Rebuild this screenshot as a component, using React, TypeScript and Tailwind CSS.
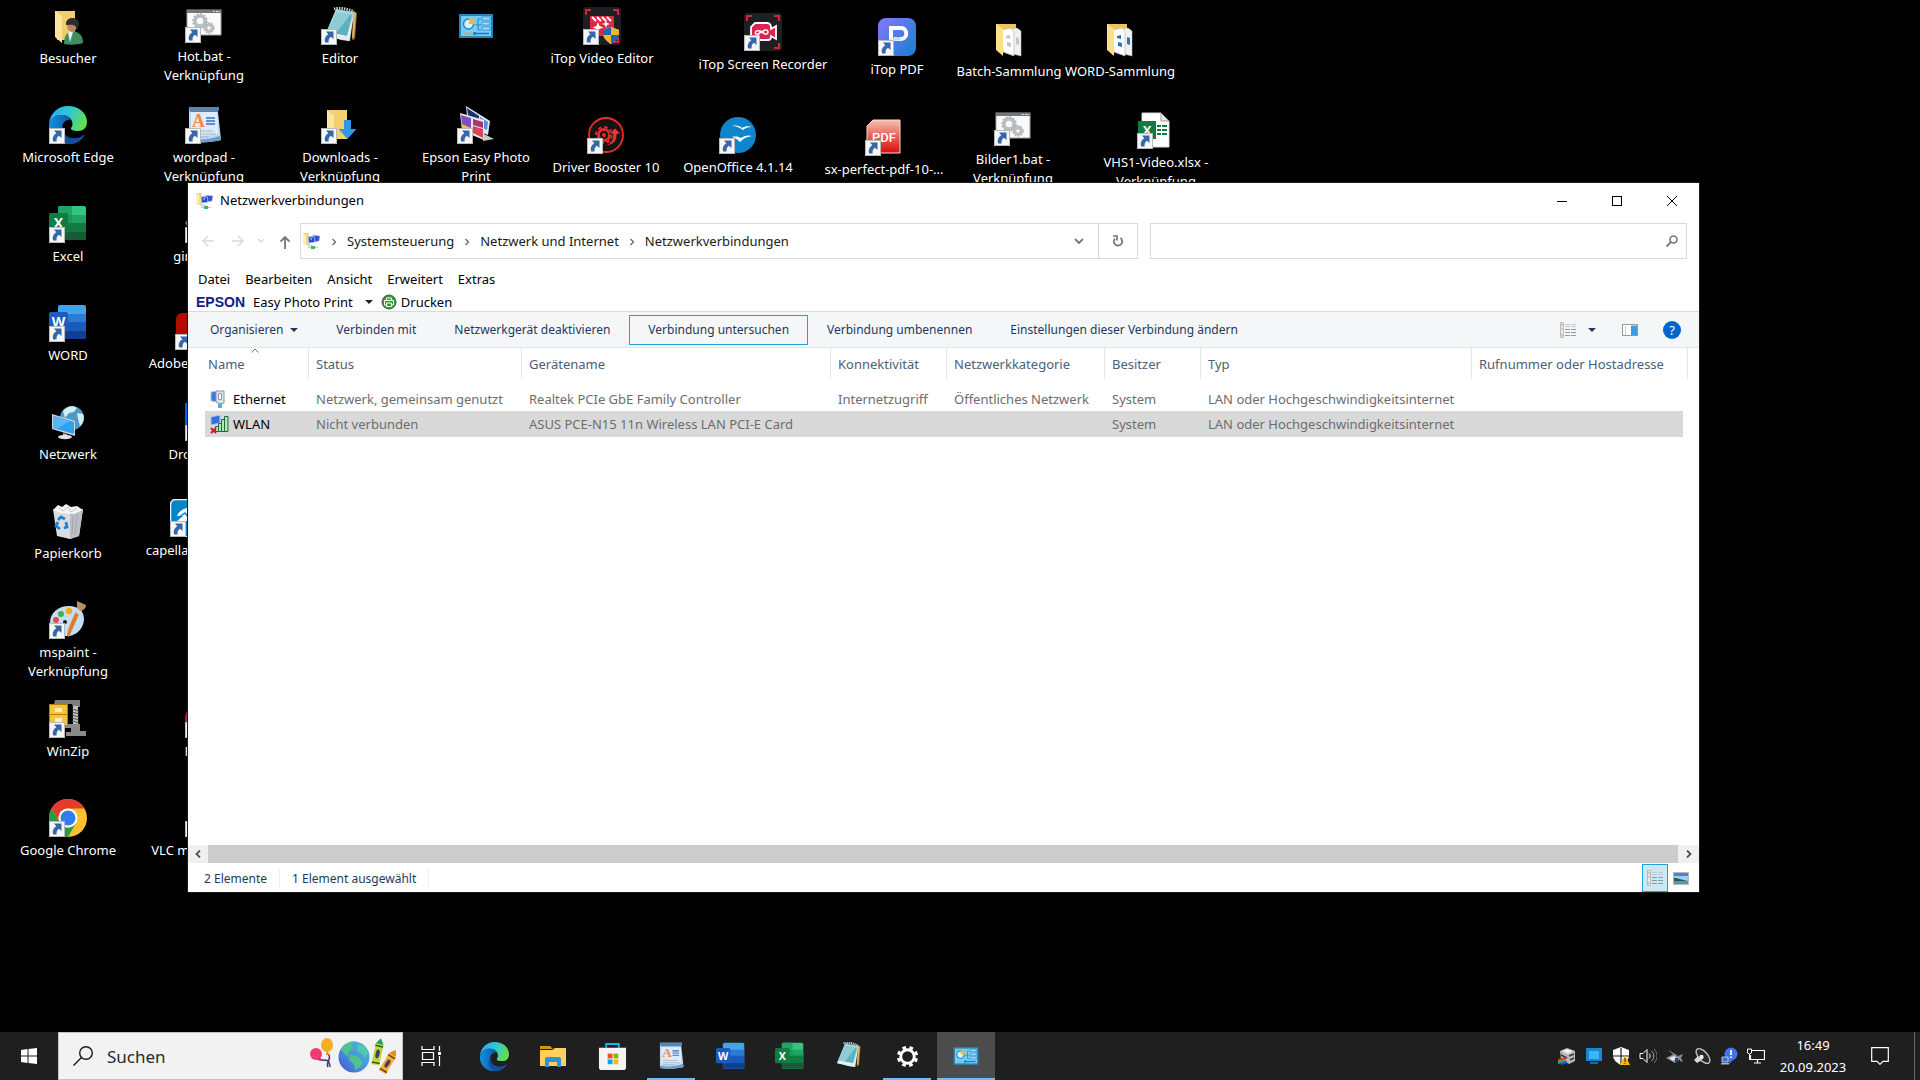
import React from 'react';

type IconProps = { className?: string };

const ShortcutArrow: React.FC = () => (
  <svg viewBox="0 0 16 16" className="absolute bottom-0 left-0 h-4 w-4">
    <rect x="0.5" y="0.5" width="15" height="15" fill="#f6f6f6" stroke="#b9b9b9" />
    <path d="M5 2.500h7.500V10L10 7.800C8 9 7.300 11 7.600 13.500H4.200C3 10 4.500 7 7.300 5.200Z" fill="#3567a8" />
  </svg>
);

const EdgeIcon: React.FC<IconProps> = ({ className }) => (
  <svg viewBox="0 0 38 38" className={className}>
    <defs>
      <linearGradient id="edgeTop" x1="0" x2="1" y1="0.2" y2="0.5">
        <stop offset="0" stopColor="#2aa9ec" />
        <stop offset="0.5" stopColor="#2fc6d6" />
        <stop offset="1" stopColor="#63e04a" />
      </linearGradient>
      <linearGradient id="edgeSide" x1="0" x2="1">
        <stop offset="0" stopColor="#1391e0" />
        <stop offset="1" stopColor="#0b4f9e" />
      </linearGradient>
    </defs>
    <path d="M0 18C1 7 9 0 19 0c11 0 19 7 19 16 0 6-4 9-9 9-5 0-7-1-7-2.500 0-1 1.500-2 1.500-4.500C23.500 12 18 9 12 9 6 9 2 13 0 18Z" fill="url(#edgeTop)" />
    <path d="M0 19C1 12 6 9 12 9c6 0 9 2 10 5-4-1-9 2-9 9 0 8 5 14 12 15C10 41-1 31 0 19Z" fill="url(#edgeSide)" />
    <path d="M14 20c-1 9 6 13 13 12 3 0 6-2 7.500-3 .8-.4 1.200 0 .8.700C32 35 26 38.500 21 38c-9-2-13-12-7-18Z" fill="#124f9c" />
  </svg>
);

const OfficeIcon: React.FC<IconProps & { letter: string; shades: string[] }> = ({ className, letter, shades }) => (
  <svg viewBox="0 0 38 38" className={className}>
    <rect x="9" y="1" width="28" height="34" rx="2" fill={shades[0]} />
    <rect x="9" y="10" width="28" height="9" fill={shades[1]} />
    <rect x="9" y="18" width="28" height="9" fill={shades[2]} />
    <path d="M9 27h28v6a2 2 0 0 1-2 2H11a2 2 0 0 1-2-2Z" fill={shades[3]} />
    {letter === 'X' && (
      <>
        <path d="M11 1h12v9H9V3a2 2 0 0 1 2-2Z" fill="#21a366" />
        <path d="M9 10h14v8H9Z" fill="#179a5a" />
        <path d="M23 18h14v9H23Z" fill="#107c41" />
      </>
    )}
    <rect x="0" y="8" width="19" height="20" rx="2" fill={shades[4]} />
    <text x="9.500" y="23" textAnchor="middle" fontSize="14" fontWeight="700" fontFamily="Open Sans" fill="#fff">{letter}</text>
  </svg>
);

const wordShades = ['#41a5ee', '#2b7cd3', '#185abd', '#103f91', '#1b5cbe'];
const excelShades = ['#33c481', '#21a366', '#107c41', '#185c37', '#107c41'];

const WordIcon: React.FC<IconProps> = ({ className }) => <OfficeIcon className={className} letter="W" shades={wordShades} />;
const ExcelIcon: React.FC<IconProps> = ({ className }) => <OfficeIcon className={className} letter="X" shades={excelShades} />;

const NotepadIcon: React.FC<IconProps> = ({ className }) => (
  <svg viewBox="0 0 38 38" className={className}>
    <path d="m32 4 4 2-2 26-3 1Z" fill="#9a6d2c" />
    <path d="m33 5 2 1-2 24-2 1Z" fill="#e0b767" />
    <path d="M15 2 33 5l-4 29-9-1L4 28Z" fill="#9fd5dd" />
    <path d="m16 6 15 2-5 21L7 25Z" fill="#5eb2c0" />
    <path d="M16 6 7 25l8 1L29 8Z" fill="#8dcdd6" />
    <path d="m26 29-19-4-3 4 24 5 5-28Z" fill="#e7eef0" />
    <path d="M13 2c6-2 14 0 20 3" fill="none" stroke="#c5cdd0" strokeWidth="3" strokeDasharray="1.500 1" />
  </svg>
);

const WordpadIcon: React.FC<IconProps> = ({ className }) => (
  <svg viewBox="0 0 38 38" className={className}>
    <path d="M4 1h30l-1 5 3 28c-9 2-22 4-32 1Z" fill="#bcdaf3" />
    <path d="M6 5h26l1 23c-9 2-18 2-27 1Z" fill="#dcecfa" />
    <path d="M4 1h30l-1 5H5Z" fill="#5586b4" />
    <path d="M4 32c10 3 22 1 31-2l1 4c-9 2-22 4-32 1Z" fill="#6f9cc5" />
    <text x="7" y="21" fontSize="18" fontWeight="700" fontFamily="Liberation Serif" fill="#f58a3c">A</text>
    <path d="M21 12h9M21 15h9M21 18h9" stroke="#3c6cc0" strokeWidth="1.500" />
    <path d="M8 25h20M8 28h23M8 31h16" stroke="#9fb3c8" />
  </svg>
);

const BatchIcon: React.FC<IconProps> = ({ className }) => (
  <svg viewBox="0 0 38 38" className={className}>
    <rect x="2" y="5" width="34" height="25" fill="#fafafa" stroke="#9da1a5" />
    <path d="M2 5h34v3H2Z" fill="#73777c" />
    <path d="M28 6.500h1.500m1.500 0h1.500m1 0h1" stroke="#fff" />
    <circle cx="15" cy="16" r="5" fill="none" stroke="#b9bec3" strokeWidth="3.500" />
    <circle cx="15" cy="16" r="7" fill="none" stroke="#a9afb5" strokeWidth="1.500" strokeDasharray="2 1.660" />
    <circle cx="24" cy="23" r="3.200" fill="none" stroke="#b9bec3" strokeWidth="3" />
    <circle cx="24" cy="23" r="5" fill="none" stroke="#a9afb5" strokeWidth="1.500" strokeDasharray="1.700 1.440" />
  </svg>
);

const UserFolderIcon: React.FC<IconProps> = ({ className }) => (
  <svg viewBox="0 0 38 38" className={className}>
    <path d="M6 4h20v29H8Z" fill="#f0cd6d" />
    <path d="m6 4 7 5v27l-7-6Z" fill="#fde49a" />
    <path d="M15 37c0-9 3-12 9-13 6 1 10 4 10 12-6 2-13 2-19 1Z" fill="#3f8e63" />
    <path d="m19 26 3-3 2 2-3 10Z" fill="#eef1ee" />
    <ellipse cx="23" cy="18" rx="5" ry="7" fill="#b98863" />
    <path d="M17 18c-1-9 13-9 13-1l-2 6c-1-5-3-6-11-5Z" fill="#2d2d2d" />
  </svg>
);

const DownloadsIcon: React.FC<IconProps> = ({ className }) => (
  <svg viewBox="0 0 38 38" className={className}>
    <path d="M6 4h20v29H8Z" fill="#f2cf70" />
    <path d="m6 4 7 5v27l-7-6Z" fill="#fde49a" />
    <path d="M23 14h7v9h5.500l-9 10-9-10H23Z" fill="#2f97ea" />
  </svg>
);

const ControlPanelIcon: React.FC<IconProps> = ({ className }) => (
  <svg viewBox="0 0 38 38" className={className}>
    <rect x="2" y="7" width="34" height="24" fill="#2586b4" />
    <rect x="4" y="9" width="30" height="20" fill="#74cdf8" />
    <circle cx="11.500" cy="17" r="5" fill="#d9f2ff" stroke="#2a86c4" strokeWidth="1.500" />
    <path d="M12 17v-6a6 6 0 0 1 6 6Z" fill="#f9b52c" />
    <path d="M18 18h3v-6h3m-3 6h3m-3 0v5h3" fill="none" stroke="#2a86c4" />
    <path d="M25 10h8v3h-8Zm0 5h8v3h-8Zm0 5h8v3h-8Z" fill="#a6e0fb" stroke="#2a86c4" strokeWidth="0.800" />
    <path d="M7 26.500h10" stroke="#f0a11a" strokeWidth="1.500" />
    <path d="M17 26.500h15" stroke="#1f78b5" strokeWidth="1.500" />
    <rect x="16.500" y="25" width="2.500" height="3" fill="#1f78b5" />
  </svg>
);

const VideoEditorIcon: React.FC<IconProps> = ({ className }) => (
  <svg viewBox="0 0 38 38" className={className}>
    <rect width="38" height="38" rx="4" fill="#1d1f22" />
    <path d="M3 8V3h5m22 0h5v5M35 30v5h-5" fill="none" stroke="#d3263a" strokeWidth="2" />
    <path d="M7 9h24v20H7Z" fill="#e32741" />
    <path d="m9 10 4 4m1-4 4 4m1-4 4 4m1-4 4 4" stroke="#fff" strokeWidth="2" />
    <path d="m15 15 1.500 4 4 1.500-4 1.500-1.500 4-1.500-4-4-1.500 4-1.500Zm8-2 1 3 3 1-3 1-1 3-1-3-3-1 3-1Z" fill="#fff" />
    <path d="m28 20 8 3c0 6-2 10-8 14-6-4-8-8-8-14Z" fill="#f5f5f5" />
    <path d="m28 20 8 3v5h-8Zm0 8v9c-4-3-7-5-8-9Z" fill="#f6b52e" />
    <path d="m28 20-8 3v5h8Zm0 8v9c4-3 7-5 8-9Z" fill="#2164b8" />
  </svg>
);

const RecorderIcon: React.FC<IconProps> = ({ className }) => (
  <svg viewBox="0 0 38 38" className={className}>
    <rect width="38" height="38" rx="4" fill="#1d1f22" />
    <path d="M3 8V3h5m22 0h5v5M35 30v5h-5" fill="none" stroke="#d3263a" strokeWidth="2" />
    <path d="M11 10h12a4 4 0 0 1 4 4v2l5-3v13l-5-3v1a3 3 0 0 1-3 3H10a3 3 0 0 1-3-3V14Z" fill="#df2350" stroke="#fff" strokeWidth="1.800" />
    <path d="m12 22 9-5c4-1 4 5 0 4l-5-3c-6-2-6 5-1 3" fill="none" stroke="#fff" strokeWidth="1.500" />
  </svg>
);

const ItopPdfIcon: React.FC<IconProps> = ({ className }) => (
  <svg viewBox="0 0 38 38" className={className}>
    <defs>
      <linearGradient id="itop" x1="0" y1="0" x2="1" y2="1">
        <stop offset="0" stopColor="#8578f8" />
        <stop offset="1" stopColor="#187fd0" />
      </linearGradient>
    </defs>
    <rect width="38" height="38" rx="8" fill="url(#itop)" />
    <path d="M13 20V10h10c7 0 7 11 0 11h-7" fill="none" stroke="#fff" strokeWidth="4" />
    <path d="M14 21h7v-1.500" stroke="#bfe3ff" strokeWidth="3" />
    <path d="M11 20h4v9h-4Z" fill="#fff" opacity="0.900" />
  </svg>
);

const FilesFolderIcon: React.FC<IconProps & { mark?: string }> = ({ className, mark = '#c3c7cb' }) => (
  <svg viewBox="0 0 38 38" className={className}>
    <path d="M6 4h20v25H8Z" fill="#eac55f" />
    <path d="m19 10 8-2 4 3v25l-8-2Z" fill="#f1f1f1" stroke="#c5c5c5" strokeWidth="0.500" />
    <path d="m12 10 9-2 3 4v24l-11-4Z" fill="#fff" stroke="#bbb" strokeWidth="0.700" />
    <path d="m16 16 4-1v4l-4-1Zm1 6 4 1v4l-4-1Zm9-5 3 1v7l-3-1Z" fill={mark} />
    <path d="m6 4 7 5v27l-7-6Z" fill="#fde08c" />
  </svg>
);

const WordFolderIcon: React.FC<IconProps> = ({ className }) => <FilesFolderIcon className={className} mark="#2f6fc4" />;

const EpsonPhotoIcon: React.FC<IconProps> = ({ className }) => (
  <svg viewBox="0 0 38 38" className={className}>
    <path d="m9 0 24 15-2 14-20-8Z" fill="#dfe6f2" />
    <path d="m10 2 12 8v9l-10-4Z" fill="#15336f" />
    <path d="m23 11 8 5-1 8-7-3Z" fill="#5b8be0" />
    <path d="m3 7 24 7v20L5 25Z" fill="#e9e4ee" />
    <path d="m4 9 10 3v11L5 20Z" fill="#7d4fc3" />
    <path d="m16 13 10 3v6l-10-3Z" fill="#a03c6a" />
    <path d="m16 20 10 3v9l-10-5Z" fill="#d6455c" />
    <path d="m5 18 9 4v4l-9-3Z" fill="#e8c34a" />
    <path d="m27 28 10 5-11 2Z" fill="#c9c9c9" />
  </svg>
);

const DriverBoosterIcon: React.FC<IconProps> = ({ className }) => (
  <svg viewBox="0 0 38 38" className={className}>
    <circle cx="19" cy="19" r="17" fill="#141414" stroke="#ee2a2e" strokeWidth="1.800" />
    <circle cx="17" cy="19" r="5.500" fill="none" stroke="#e4282c" strokeWidth="3" />
    <circle cx="17" cy="19" r="8" fill="none" stroke="#e4282c" strokeWidth="2" strokeDasharray="3.500 2.780" />
    <path d="M16 29c7 0 10-4 10-11h-4l6-6 6 6h-4c0 8-5 13-14 11Z" fill="#f03438" stroke="#141414" strokeWidth="0.800" />
    <circle cx="17" cy="19" r="2" fill="#e4282c" />
  </svg>
);

const OpenOfficeIcon: React.FC<IconProps> = ({ className }) => (
  <svg viewBox="0 0 38 38" className={className}>
    <circle cx="19" cy="19" r="18" fill="#0e85cd" />
    <path d="M13 10c5-1 8 0 10 2 3-2 7-2 10-1-4 0-7 1-9 3-3-2-6-4-11-4Z" fill="#fff" />
    <path d="M13 21c4-1 7 0 9 1 4-3 8-3 11-2-6 1-9 3-12 6-3-3-5-4-8-5Z" fill="#fff" />
  </svg>
);

const PerfectPdfIcon: React.FC<IconProps> = ({ className }) => (
  <svg viewBox="0 0 38 38" className={className}>
    <defs>
      <linearGradient id="perfectPdf" x1="0" y1="0" x2="0" y2="1">
        <stop offset="0" stopColor="#f5c0b0" />
        <stop offset="0.450" stopColor="#e96a5d" />
        <stop offset="1" stopColor="#dd0b0b" />
      </linearGradient>
    </defs>
    <path d="M8 2h27v33H2V8Z" fill="url(#perfectPdf)" stroke="#f7ddd4" strokeLinejoin="round" />
    <text x="19" y="24" textAnchor="middle" fontSize="13" fontFamily="Roboto" fontWeight="500" fill="#fff">PDF</text>
  </svg>
);

const XlsxIcon: React.FC<IconProps> = ({ className }) => (
  <svg viewBox="0 0 38 38" className={className}>
    <path d="M5 2h19l8 8v26H5Z" fill="#fff" stroke="#d8d8d8" />
    <path d="M24 2v8h8Z" fill="#e9e9e9" stroke="#9b9b9b" />
    <path d="M20 15h4m1 0h5m-10 4h4m1 0h5m-10 4h4m1 0h5" stroke="#107c41" strokeWidth="1.800" />
    <rect x="1" y="10" width="18" height="18" fill="#107c41" />
    <text x="10" y="24" textAnchor="middle" fontSize="13" fontWeight="700" fontFamily="Open Sans" fill="#fff">X</text>
  </svg>
);

const NetworkIcon: React.FC<IconProps> = ({ className }) => (
  <svg viewBox="0 0 38 38" className={className}>
    <circle cx="23" cy="15" r="12" fill="#4b9cc4" />
    <path d="M14 8c4-5 10-6 14-3l-3 4-5 1-4 5Zm14 2 6 1c2 5 0 9-3 12l-2-7Z" fill="#d3edf3" />
    <path d="m3 11 23 7v15L3 26Z" fill="#cfd4d8" />
    <path d="m4 12.500 21 6.500v12L4 25Z" fill="#2f9ff2" />
    <path d="m4 12.500 17 5.500L8 26l-4-1Z" fill="#55b5fa" />
    <path d="m14 30 4 1v3h-4Z" fill="#aaa" />
    <ellipse cx="16" cy="34" rx="7" ry="2.200" fill="#dfe1e3" />
  </svg>
);

const RecycleIcon: React.FC<IconProps> = ({ className }) => (
  <svg viewBox="0 0 38 38" className={className}>
    <path d="m4 7 7 3 15 1 8-4-4 27-9 3-13-3Z" fill="#d9dde0" />
    <path d="M21 11 34 7l-4 27-9 3Z" fill="#b9bfc4" />
    <path d="m4 8 5-5 4 2 4-3 5 3 6-1 6 4-9 4-13-1Z" fill="#f3f4f5" />
    <path d="m10 6 4 3 5-4 3 5 6-4" fill="none" stroke="#bfc5c9" />
    <path d="m9 18 3-3 4 2m1 3 1 5-3 1m-4 1-4-3 2-4" fill="none" stroke="#1c7fd6" strokeWidth="2.800" />
    <path d="m24 14-1 19m5-20-2 19" stroke="#a5abb0" />
  </svg>
);

const PaintIcon: React.FC<IconProps> = ({ className }) => (
  <svg viewBox="0 0 38 38" className={className}>
    <path d="M1 22C1 11 10 5 20 5c9 0 15 5 15 13 0 9-8 18-18 17C12 35 1 32 1 22Z" fill="#c5def2" />
    <circle cx="7" cy="19" r="3" fill="#e14b4b" />
    <circle cx="12" cy="13" r="3" fill="#49b04a" />
    <circle cx="20" cy="10" r="3.200" fill="#f6a821" />
    <circle cx="16" cy="21" r="2" fill="#16191c" />
    <path d="m28 9 3 2-11 25-2-1c1-8 5-17 10-26Z" fill="#e07b2c" />
    <path d="m28 7 5 3-3 4-3-2Z" fill="#cfd6dc" />
    <path d="m28 0 9 4c0 3-2 5-5 6l-4-3Z" fill="#b98f66" />
  </svg>
);

const WinZipIcon: React.FC<IconProps> = ({ className }) => (
  <svg viewBox="0 0 38 38" className={className}>
    <path d="M6 0h25v7h-7l-1-3H5Z" fill="#7e7e7e" />
    <path d="M24 6h5v22h-5Z" fill="#bfbfbf" />
    <path d="m23 9 7 2m-7 1 7 2m-7 1 7 2m-7 1 7 2m-7 1 7 2" stroke="#555" />
    <path d="M15 24h16v7h6v5H17v-4h5v-4h-7Z" fill="#8a8a8a" />
    <rect x="0" y="4" width="19" height="22" fill="#b77d11" />
    <path d="M1 5h17v9H1Zm0 10h17v10H1Z" fill="#f7c338" />
    <path d="M6 8h7v4H6Zm0 10h7v4H6Z" fill="#fff0bd" />
  </svg>
);

const ChromeIcon: React.FC<IconProps> = ({ className }) => (
  <svg viewBox="0 0 38 38" className={className}>
    <circle cx="19" cy="19" r="19" fill="#fbc02d" />
    <path d="M2.500 9.500A19 19 0 0 1 35.500 9.500H19A9.500 9.500 0 0 0 10.800 23.800Z" fill="#e33b2e" />
    <path d="M2.500 9.500A19 19 0 0 0 19 38l8.200-14.200A9.500 9.500 0 0 1 10.800 23.800Z" fill="#269a48" />
    <circle cx="19" cy="19" r="9.500" fill="#fff" />
    <circle cx="19" cy="19" r="7.500" fill="#2f7df0" />
  </svg>
);

const GrayAppIcon: React.FC<IconProps> = ({ className }) => (
  <svg viewBox="0 0 38 38" className={className}>
    <path d="M0 18c4-8 10-4 16-6l14-6v22H6Z" fill="#6d6a66" />
  </svg>
);

const AcrobatIcon: React.FC<IconProps> = ({ className }) => (
  <svg viewBox="0 0 38 38" className={className}>
    <rect x="1" y="1" width="36" height="36" rx="6" fill="#b30b00" />
  </svg>
);

const DropboxIcon: React.FC<IconProps> = ({ className }) => (
  <svg viewBox="0 0 38 38" className={className}>
    <rect width="38" height="38" fill="#0061fe" />
  </svg>
);

const CapellaIcon: React.FC<IconProps> = ({ className }) => (
  <svg viewBox="0 0 38 38" className={className}>
    <rect x="0.500" y="0.500" width="37" height="37" rx="5" fill="#0a85c7" stroke="#e4f2fa" strokeWidth="1.500" />
    <path d="M7 17c2-6 9-9 17-9v14H7l6-5Z" fill="#f3f9fc" />
    <path d="m9 18 6-4 5 6" fill="none" stroke="#0a85c7" strokeWidth="1.500" />
  </svg>
);

const RedAppIcon: React.FC<IconProps> = ({ className }) => (
  <svg viewBox="0 0 38 38" className={className}>
    <circle cx="19" cy="19" r="19" fill="#b3262b" />
  </svg>
);

const ConeIcon: React.FC<IconProps> = ({ className }) => (
  <svg viewBox="0 0 38 38" className={className}>
    <path d="m14 2 10 0 8 30H6Z" fill="#ef7d1a" />
  </svg>
);

type Shortcut = {
  place: string;
  icon: React.FC<IconProps>;
  lines: string[];
  link?: boolean;
};

// Icons sit freely on the desktop, so each carries its own position
const shortcuts: Shortcut[] = [
  { place: 'left-[4px] top-[7px]', icon: UserFolderIcon, lines: ['Besucher'] },
  { place: 'left-[4px] top-[106px]', icon: EdgeIcon, lines: ['Microsoft Edge'], link: true },
  { place: 'left-[4px] top-[205px]', icon: ExcelIcon, lines: ['Excel'], link: true },
  { place: 'left-[4px] top-[304px]', icon: WordIcon, lines: ['WORD'], link: true },
  { place: 'left-[4px] top-[403px]', icon: NetworkIcon, lines: ['Netzwerk'] },
  { place: 'left-[4px] top-[502px]', icon: RecycleIcon, lines: ['Papierkorb'] },
  { place: 'left-[4px] top-[601px]', icon: PaintIcon, lines: ['mspaint -', 'Verknüpfung'], link: true },
  { place: 'left-[4px] top-[700px]', icon: WinZipIcon, lines: ['WinZip'], link: true },
  { place: 'left-[4px] top-[799px]', icon: ChromeIcon, lines: ['Google Chrome'], link: true },
  { place: 'left-[140px] top-[5px]', icon: BatchIcon, lines: ['Hot.bat -', 'Verknüpfung'], link: true },
  { place: 'left-[140px] top-[106px]', icon: WordpadIcon, lines: ['wordpad -', 'Verknüpfung'], link: true },
  { place: 'left-[140px] top-[205px]', icon: GrayAppIcon, lines: ['gimp-2.10'], link: true },
  { place: 'left-[130px] top-[312px]', icon: AcrobatIcon, lines: ['Adobe Acrobat'], link: true },
  { place: 'left-[140px] top-[403px]', icon: DropboxIcon, lines: ['Dropbox 25'], link: true },
  { place: 'left-[125px] top-[499px]', icon: CapellaIcon, lines: ['capella reader'], link: true },
  { place: 'left-[140px] top-[700px]', icon: RedAppIcon, lines: ['PDF24'], link: true },
  { place: 'left-[140px] top-[799px]', icon: ConeIcon, lines: ['VLC media player'], link: true },
  { place: 'left-[276px] top-[7px]', icon: NotepadIcon, lines: ['Editor'], link: true },
  { place: 'left-[276px] top-[106px]', icon: DownloadsIcon, lines: ['Downloads -', 'Verknüpfung'], link: true },
  { place: 'left-[412px] top-[7px]', icon: ControlPanelIcon, lines: [] },
  { place: 'left-[412px] top-[106px]', icon: EpsonPhotoIcon, lines: ['Epson Easy Photo', 'Print'], link: true },
  { place: 'left-[538px] top-[7px]', icon: VideoEditorIcon, lines: ['iTop Video Editor'], link: true },
  { place: 'left-[542px] top-[116px]', icon: DriverBoosterIcon, lines: ['Driver Booster 10'], link: true },
  { place: 'left-[699px] top-[13px]', icon: RecorderIcon, lines: ['iTop Screen Recorder'], link: true },
  { place: 'left-[674px] top-[116px]', icon: OpenOfficeIcon, lines: ['OpenOffice 4.1.14'], link: true },
  { place: 'left-[833px] top-[18px]', icon: ItopPdfIcon, lines: ['iTop PDF'], link: true },
  { place: 'left-[820px] top-[118px]', icon: PerfectPdfIcon, lines: ['sx-perfect-pdf-10-...'], link: true },
  { place: 'left-[945px] top-[20px]', icon: FilesFolderIcon, lines: ['Batch-Sammlung'] },
  { place: 'left-[949px] top-[108px]', icon: BatchIcon, lines: ['Bilder1.bat -', 'Verknüpfung'], link: true },
  { place: 'left-[1056px] top-[20px]', icon: WordFolderIcon, lines: ['WORD-Sammlung'] },
  { place: 'left-[1092px] top-[111px]', icon: XlsxIcon, lines: ['VHS1-Video.xlsx -', 'Verknüpfung'], link: true },
];

const DesktopShortcut: React.FC<Shortcut> = ({ place, icon: Icon, lines, link }) => (
  <button type="button" aria-label={lines.join(' ') || 'Systemsteuerung'} className={`absolute flex w-32 flex-col items-center gap-1 text-[13px] leading-[19px] text-white ${place}`}>
    <span className="relative block h-[38px] w-[38px]">
      <Icon className="h-[38px] w-[38px]" />
      {link && <ShortcutArrow />}
    </span>
    <span className="block whitespace-nowrap">
      {lines.map((line) => (
        <span key={line} className="block">{line}</span>
      ))}
    </span>
  </button>
);

const FolderNetIcon: React.FC = () => (
  <svg viewBox="0 0 18 18" className="h-[18px] w-[18px] shrink-0">
    <path d="M0 1h6v12H2l-2-2Z" fill="#f1d987" />
    <path d="m0 1 3 3v9l-3-2Z" fill="#fbeebb" />
    <path d="m10 3 7 1-1 5-4 1Z" fill="#3353d2" stroke="#c3d2ee" strokeWidth="0.500" />
    <path d="m5 5 6-1 1 6-6 1Z" fill="#1c3fd6" stroke="#a9c4ee" strokeWidth="0.800" />
    <path d="m6.500 6 3.500-1-2 4Z" fill="#79a8f5" />
    <path d="M4 12.500h5l1 1.500-5 .500Z" fill="#c5d5e8" />
    <path d="M5 15h10v1H5Z" fill="#a8dda3" />
    <path d="M8 14h4v3H8Z" fill="#3fb958" />
  </svg>
);

const Chevron: React.FC = () => (
  <svg viewBox="0 0 6 8" className="h-2 w-1.5 shrink-0">
    <path d="m1.500 1 3 3-3 3" fill="none" stroke="#6d6d6d" strokeWidth="1.400" />
  </svg>
);

const Caret: React.FC<{ color: string }> = ({ color }) => (
  <svg viewBox="0 0 8 4" className="h-1 w-2 shrink-0">
    <path d="M0 0h8L4 4Z" fill={color} />
  </svg>
);

const TitleBar: React.FC = () => (
  <header className="flex h-[35px] shrink-0 items-center pl-2 text-[13px]">
    <FolderNetIcon />
    <h1 className="ml-1.5 flex-1">Netzwerkverbindungen</h1>
    <button type="button" aria-label="Minimieren" className="flex h-full w-[54px] items-center justify-center">
      <svg viewBox="0 0 10 10" className="h-2.5 w-2.5"><path d="M0 5.500h10" stroke="#000" /></svg>
    </button>
    <button type="button" aria-label="Maximieren" className="flex h-full w-14 items-center justify-center">
      <svg viewBox="0 0 10 10" className="h-2.5 w-2.5"><rect x="0.500" y="0.500" width="9" height="9" fill="none" stroke="#000" /></svg>
    </button>
    <button type="button" aria-label="Schließen" className="flex h-full w-[54px] items-center justify-center">
      <svg viewBox="0 0 10 10" className="h-2.5 w-2.5"><path d="m0 0 10 10M10 0 0 10" stroke="#000" /></svg>
    </button>
  </header>
);

const crumbs = ['Systemsteuerung', 'Netzwerk und Internet', 'Netzwerkverbindungen'];

const AddressRow: React.FC = () => (
  <div className="mt-[5px] flex h-9 shrink-0 items-center px-3 text-[13px]">
    <div className="flex w-[100px] shrink-0 items-center">
      <button type="button" aria-label="Zurück" className="w-[30px] pl-0.5">
        <svg viewBox="0 0 12 12" className="h-3 w-3"><path d="M12 6H1m5-5L1 6l5 5" fill="none" stroke="#dadada" strokeWidth="1.400" /></svg>
      </button>
      <button type="button" aria-label="Vorwärts" className="w-[26px] pl-0.5">
        <svg viewBox="0 0 12 12" className="h-3 w-3"><path d="M0 6h11M6 1l5 5-5 5" fill="none" stroke="#dadada" strokeWidth="1.400" /></svg>
      </button>
      <button type="button" aria-label="Zuletzt besucht" className="w-[22px] pl-0.5">
        <svg viewBox="0 0 6 4" className="h-1 w-1.5"><path d="m0 0 3 3 3-3" fill="none" stroke="#dadada" strokeWidth="1.400" /></svg>
      </button>
      <button type="button" aria-label="Nach oben" className="pt-0.5 pl-0.5">
        <svg viewBox="0 0 10 14" className="h-3.5 w-2.5"><path d="M5 14V2M.500 6.500 5 2l4.500 4.500" fill="none" stroke="#757575" strokeWidth="1.800" /></svg>
      </button>
    </div>
    <nav className="flex h-full min-w-0 flex-[834] items-center border border-[#d9d9d9] pl-0.5">
      <FolderNetIcon />
      {crumbs.map((crumb) => (
        <React.Fragment key={crumb}>
          <span className="mx-2.5 flex pt-px"><Chevron /></span>
          <a href="#" className="pt-px whitespace-nowrap text-[#191919]">{crumb}</a>
        </React.Fragment>
      ))}
      <button type="button" aria-label="Verlauf" className="mr-3.5 ml-auto">
        <svg viewBox="0 0 10 6" className="h-1.5 w-2.5"><path d="m1 1 4 4 4-4" fill="none" stroke="#757575" strokeWidth="1.800" /></svg>
      </button>
      <button type="button" aria-label="Aktualisieren" className="flex h-full w-[39px] items-center justify-center border-l border-[#d9d9d9]">
        <svg viewBox="0 0 12 12" className="h-3 w-3"><path d="M8.500 3A4.200 4.200 0 1 1 3 3.500M1 1h4v4.500" fill="none" stroke="#757575" strokeWidth="1.700" /></svg>
      </button>
    </nav>
    <label className="ml-3 flex h-full min-w-0 flex-[527] items-center border border-[#d9d9d9] pr-2">
      <input type="search" aria-label="Netzwerkverbindungen durchsuchen" className="h-full min-w-0 flex-1 px-2 outline-none" />
      <svg viewBox="0 0 12 12" className="h-3 w-3"><circle cx="7.500" cy="4.500" r="3.500" fill="none" stroke="#757575" strokeWidth="1.600" /><path d="M5 7 .500 11.500" stroke="#757575" strokeWidth="1.800" /></svg>
    </label>
  </div>
);

const menus = ['Datei', 'Bearbeiten', 'Ansicht', 'Erweitert', 'Extras'];

const MenuBar: React.FC = () => (
  <>
    <nav className="mt-[9px] flex h-[23px] shrink-0 items-center gap-[15px] pl-2.5 text-[13px]">
      {menus.map((menu) => (
        <button key={menu} type="button">{menu}</button>
      ))}
    </nav>
    <div className="flex h-5 shrink-0 items-center pt-0.5 pl-2 text-[13px] leading-[18px]">
      <span className="font-['Liberation_Sans',sans-serif] text-[14px] font-bold text-[#101c8c]">EPSON</span>
      <button type="button" className="ml-2 flex items-center gap-3">Easy Photo Print <Caret color="#222222" /></button>
      <button type="button" className="ml-2 flex items-center gap-1">
        <svg viewBox="0 0 16 16" className="h-4 w-4">
          <circle cx="8" cy="8" r="7" fill="#2f9e35" stroke="#4b584b" />
          <path d="M5.500 6V4h5v2M5 11H3.500V6.500h9V11H11M5.500 9h5v3.500h-5Z" fill="none" stroke="#fff" />
        </svg>
        Drucken
      </button>
    </div>
  </>
);

const DetailsIcon: React.FC = () => (
  <svg viewBox="0 0 16 16" className="h-4 w-4">
    <path d="M.500.500h3v15h-3Z" fill="#ececec" stroke="#bbb" />
    <path d="M1.500 3h1m-1 10h1" stroke="#666" />
    <path d="M1.500 7h1" stroke="#d65a2e" />
    <path d="M5 2.500h5m1 0h5m-11 2h5m1 0h5" stroke="#bccbd2" />
    <path d="M5 7.500h5m1 0h5m-11 3h5m1 0h5m-11 3h5m1 0h5" stroke="#909a9f" />
  </svg>
);

const commands = ['Verbinden mit', 'Netzwerkgerät deaktivieren', 'Verbindung untersuchen', 'Verbindung umbenennen', 'Einstellungen dieser Verbindung ändern'];

const CommandBar: React.FC = () => (
  <div className="flex h-[37px] shrink-0 items-center border-t border-b border-t-[#d9d9d9] border-b-[#e5e5e5] bg-[#f5f6f7] pl-[3px] text-[12px] text-[#1e395b]">
    <button type="button" className="flex items-center gap-[7px] px-[19px]">Organisieren <Caret color="#1e395b" /></button>
    {commands.map((command) => (
      <button key={command} type="button" className={`h-[30px] border px-[18px] whitespace-nowrap ${command === 'Verbindung untersuchen' ? 'border-[#26a0da]' : 'border-transparent'}`}>
        {command}
      </button>
    ))}
    <div className="ml-auto flex items-center pr-[18px]">
      <button type="button" aria-label="Ansicht ändern"><DetailsIcon /></button>
      <button type="button" aria-label="Weitere Optionen" className="ml-3"><Caret color="#1e395b" /></button>
      <button type="button" aria-label="Vorschaufenster" className="ml-[26px]">
        <svg viewBox="0 0 16 12" className="h-3 w-4"><rect x="0.500" y="0.500" width="15" height="11" fill="#fff" stroke="#999" /><path d="M3.500 2v9" stroke="#ccc" /><path d="M9 1.500h6V11H9Z" fill="#3c9be6" /></svg>
      </button>
      <button type="button" aria-label="Hilfe" className="ml-[25px] flex h-[18px] w-[18px] items-center justify-center rounded-full bg-[#0066cc] text-[13px] leading-[18px] text-white">?</button>
    </div>
  </div>
);

const columns = [
  { name: 'Name', width: 'w-[104px]' },
  { name: 'Status', width: 'w-[213px]' },
  { name: 'Gerätename', width: 'w-[309px]' },
  { name: 'Konnektivität', width: 'w-[116px]' },
  { name: 'Netzwerkkategorie', width: 'w-[158px]' },
  { name: 'Besitzer', width: 'w-[96px]' },
  { name: 'Typ', width: 'w-[271px]' },
  { name: 'Rufnummer oder Hostadresse', width: 'w-[211px]' },
];

const connections = [
  { name: 'Ethernet', cells: ['Netzwerk, gemeinsam genutzt', 'Realtek PCIe GbE Family Controller', 'Internetzugriff', 'Öffentliches Netzwerk', 'System', 'LAN oder Hochgeschwindigkeitsinternet', ''] },
  { name: 'WLAN', cells: ['Nicht verbunden', 'ASUS PCE-N15 11n Wireless LAN PCI-E Card', '', '', 'System', 'LAN oder Hochgeschwindigkeitsinternet', ''] },
];

const EthernetIcon: React.FC = () => (
  <svg viewBox="0 0 19 19" className="h-[19px] w-[19px]">
    <path d="m1 2 7-1v11l-7-1Z" fill="#3d78e0" stroke="#b6c5db" />
    <path d="M6 1h8v12l-4 1-4-2Z" fill="#dbe2ea" stroke="#8b98a8" />
    <path d="M8.500 3.500h3v6h-3Z" fill="#fff" stroke="#8b98a8" />
    <path d="M8 13h4v5H8Z" fill="#46b6e0" />
  </svg>
);

const WlanIcon: React.FC = () => (
  <svg viewBox="0 0 19 19" className="h-[19px] w-[19px]">
    <path d="m1 2 9-2v8l-9 2Z" fill="#2f6fe0" stroke="#b6c5db" />
    <path d="M5.500 11.500h3v5h-3Zm3-3h3v8h-3Zm3-4h3v12h-3Zm3-3h3.500v15h-3.500Z" fill="#a9eab6" stroke="#27663a" />
    <path d="m1 13 5 5m0-5-5 5" stroke="#c7201f" strokeWidth="2" />
  </svg>
);

const ConnectionTable: React.FC = () => (
  <table className="ml-[17px] w-[1483px] table-fixed border-separate border-spacing-0 text-left text-[13px]">
    <thead>
      <tr className="h-[31px] text-[#4c607a]">
        {columns.map((column, i) => (
          <th key={column.name} scope="col" className={`relative p-0 pt-0.5 font-normal whitespace-nowrap ${column.width} ${i === 0 ? 'border-r border-[#e5e5e5] pl-[3px]' : i === 7 ? 'pl-[7px]' : 'border-r border-[#e5e5e5] pl-[7px]'}`}>
            {column.name}
            {i === 0 && (
              <svg viewBox="0 0 8 5" className="absolute top-0 left-[46px] h-[5px] w-2"><path d="m.500 4.500 3.500-3.500 3.500 3.500" fill="none" stroke="#6d6d6d" /></svg>
            )}
          </th>
        ))}
        <th aria-hidden="true" className="w-[5px] border-r border-[#e5e5e5] p-0"></th>
      </tr>
    </thead>
    <tbody className="before:block before:h-1.5 before:content-['']">
      {connections.map((connection) => {
        const cell = connection.name === 'WLAN' ? 'bg-[#d9d9d9] pt-px' : 'pt-[3px]';
        return (
          <tr key={connection.name} className="h-[26px] whitespace-nowrap text-[#6d6d6d]">
            <td className={`text-black ${cell}`}>
              <span className="flex items-center gap-1 pl-[5px]">
                {connection.name === 'WLAN' ? <WlanIcon /> : <EthernetIcon />}
                {connection.name}
              </span>
            </td>
            {connection.cells.map((text, i) => (
              <td key={i} className={`pl-[7px] ${cell}`}>{text}</td>
            ))}
          </tr>
        );
      })}
    </tbody>
  </table>
);

const ExplorerWindow: React.FC = () => (
  <main className="absolute top-[183px] right-[221px] bottom-[140px] left-[188px] flex flex-col bg-white text-black outline outline-[#1b1b1b]">
    <TitleBar />
    <AddressRow />
    <MenuBar />
    <CommandBar />
    <div className="min-h-0 flex-1 overflow-hidden">
      <ConnectionTable />
    </div>
    <div className="flex h-[18px] shrink-0 items-stretch bg-[#f0f0f0]">
      <button type="button" aria-label="Nach links" className="flex w-5 items-center justify-center">
        <svg viewBox="0 0 6 8" className="h-2 w-1.5"><path d="M5 .500 1.500 4 5 7.500" fill="none" stroke="#505050" strokeWidth="1.800" /></svg>
      </button>
      <div className="flex-1 bg-[#cdcdcd]"></div>
      <button type="button" aria-label="Nach rechts" className="flex w-[21px] items-center justify-center">
        <svg viewBox="0 0 6 8" className="h-2 w-1.5"><path d="M1 .500 4.500 4 1 7.500" fill="none" stroke="#505050" strokeWidth="1.800" /></svg>
      </button>
    </div>
    <footer className="flex h-[29px] shrink-0 items-center pt-px pr-2.5 pl-4 text-[12px] text-[#1e395b]">
      <span className="border-r border-[#f0f0f0] pt-0.5 pr-3">2 Elemente</span>
      <span className="border-r border-[#f0f0f0] px-3 pt-0.5">1 Element ausgewählt</span>
      <button type="button" aria-label="Details" className="ml-auto flex h-7 w-[26px] items-center justify-center border border-[#26a0da] bg-[#cbe8f6]"><DetailsIcon /></button>
      <button type="button" aria-label="Große Symbole" className="ml-[5px]">
        <svg viewBox="0 0 16 13" className="h-[13px] w-4">
          <rect x="0.500" y="0.500" width="15" height="12" fill="#9ccdf5" stroke="#b9b9b9" />
          <path d="M1 1h14v3H1Z" fill="#3f86dc" />
          <path d="M1 6c5 0 7 2 14 3v1H1Z" fill="#2f5a4c" />
          <path d="M1 9h14v3H1Z" fill="#4c9ac0" />
        </svg>
      </button>
    </footer>
  </main>
);

const ExplorerIcon: React.FC<IconProps> = ({ className }) => (
  <svg viewBox="0 0 30 30" className={className}>
    <path d="M2 5h10l3 3H2Z" fill="#d79708" />
    <path d="M2 9 14 9l3-2h11v18H2Z" fill="#fdd05c" />
    <path d="M7 26v-8a2 2 0 0 1 2-2h12a2 2 0 0 1 2 2v8h-4v-5h-8v5Z" fill="#3590dc" />
  </svg>
);

const StoreIcon: React.FC<IconProps> = ({ className }) => (
  <svg viewBox="0 0 30 30" className={className}>
    <path d="M8.500 6V2h13v4" fill="none" stroke="#24b2ec" strokeWidth="2" />
    <path d="M1 6h28v20a3 3 0 0 1-3 3H4a3 3 0 0 1-3-3Z" fill="#f4f4f4" />
    <path d="M10 12h5v5h-5Z" fill="#f25022" />
    <path d="M16 12h5v5h-5Z" fill="#7fba00" />
    <path d="M10 18h5v5h-5Z" fill="#00a4ef" />
    <path d="M16 18h5v5h-5Z" fill="#ffb900" />
  </svg>
);

const SettingsIcon: React.FC<IconProps> = ({ className }) => (
  <svg viewBox="0 0 30 30" className={className}>
    <circle cx="15" cy="15" r="7" fill="none" stroke="#fff" strokeWidth="3" />
    <circle cx="15" cy="15" r="9.500" fill="none" stroke="#fff" strokeWidth="3" strokeDasharray="3.800 3.660" strokeDashoffset="-1.800" />
  </svg>
);

const TaskViewIcon: React.FC<IconProps> = ({ className }) => (
  <svg viewBox="0 0 22 20" className={className}>
    <path d="M1 0v3.500h12V0M1 20v-3.500h12V20M1.500 6.500h11v7h-11ZM18.500 0v5m0 5v10" fill="none" stroke="#fff" strokeWidth="1.200" />
    <path d="M17 6h3v3h-3Z" fill="#fff" />
  </svg>
);

const tasks: { label: string; icon: React.FC<IconProps>; size: string; state?: 'open' | 'active' }[] = [
  { label: 'Microsoft Edge', icon: EdgeIcon, size: 'h-[29px] w-[29px]' },
  { label: 'Explorer', icon: ExplorerIcon, size: 'h-[30px] w-[30px]' },
  { label: 'Microsoft Store', icon: StoreIcon, size: 'h-[29px] w-[29px]' },
  { label: 'WordPad', icon: WordpadIcon, size: 'h-7 w-7', state: 'open' },
  { label: 'Word', icon: WordIcon, size: 'h-[29px] w-[29px]' },
  { label: 'Excel', icon: ExcelIcon, size: 'h-[29px] w-[29px]' },
  { label: 'Editor', icon: NotepadIcon, size: 'h-7 w-7' },
  { label: 'Einstellungen', icon: SettingsIcon, size: 'h-[29px] w-[29px]', state: 'open' },
  { label: 'Netzwerkverbindungen', icon: ControlPanelIcon, size: 'h-7 w-7', state: 'active' },
];

const SearchDoodle: React.FC = () => (
  <svg viewBox="0 0 90 40" className="h-10 w-[90px] shrink-0">
    <defs>
      <linearGradient id="globe" x1="1" y1="0" x2="0" y2="1">
        <stop offset="0" stopColor="#3fc0d8" />
        <stop offset="0.550" stopColor="#4a91e0" />
        <stop offset="1" stopColor="#4050c8" />
      </linearGradient>
    </defs>
    <path d="M20 18c5 4-3 8 0 13M13 24c8 0 8 0 9 7" fill="none" stroke="#47307e" strokeWidth="1.500" />
    <ellipse cx="19" cy="9" rx="6" ry="7" fill="#f7ad21" />
    <path d="m19 15 3 4h-4Z" fill="#dd8a12" />
    <ellipse cx="8" cy="18" rx="6" ry="6" fill="#ef3d72" />
    <path d="m12 21 2 4-5-1Z" fill="#d32960" />
    <circle cx="46" cy="21" r="15.500" fill="url(#globe)" />
    <path d="M33 14c3-5 8-9 14-9l-4 4 3 3-6 4 1 5-4-3Z" fill="#4fc983" opacity="0.900" />
    <path d="m42 18 8 3 5 5-3 5-5 3-1-6-5-4Z" fill="#4fc983" opacity="0.900" />
    <path d="m50 8 7 3 3 6-3 5-3-4-5-3Z" fill="#58d59a" opacity="0.700" />
    <g transform="rotate(12 70 16)">
      <path d="M66 8h8v21h-8Z" fill="#b6da3a" />
      <path d="m66 8 4-6 4 6Z" fill="#2d9b6a" />
      <path d="M66 10h8m-8 17h8" stroke="#365d1f" strokeWidth="1.500" />
      <ellipse cx="70" cy="18" rx="2" ry="4.500" fill="#4b3b63" />
    </g>
    <g transform="rotate(31 81 25)">
      <path d="M77 18h8v20h-8Z" fill="#f3b234" />
      <path d="m77 18 4-6 4 6Z" fill="#e08a1e" />
      <path d="M77 20h8m-8 16h8" stroke="#6b4310" strokeWidth="1.500" />
      <ellipse cx="81" cy="28" rx="2" ry="4.500" fill="#4b3b63" />
    </g>
  </svg>
);

const trayIcons: { label: string; art: React.ReactNode }[] = [
  {
    label: 'Drucker',
    art: (
      <>
        <path d="m2 4 7-3 8 3v10l-6 3-8-5Z" fill="#b9b9b9" />
        <path d="m4 4 5-2 6 2-5 3Z" fill="#efefef" />
        <path d="m3 8 6 3m2-2 5-2m-4 6 4-2" stroke="#3a3a3a" strokeWidth="1.500" />
        <path d="m0 12 8-2v2l-8 3Z" fill="#e23030" />
        <path d="m0 14 8-2v2l-8 3Z" fill="#39b54a" />
        <path d="m1 16 8-2v2l-5 2Z" fill="#2a50e0" />
      </>
    ),
  },
  {
    label: 'Grafik',
    art: (
      <>
        <rect x="1" y="1" width="16" height="13" fill="#1b86cf" />
        <rect x="4" y="4" width="10" height="8" fill="#38b6f5" />
        <path d="M5 15h8v2H5Z" fill="#156da8" />
      </>
    ),
  },
  {
    label: 'Windows-Sicherheit',
    art: (
      <>
        <path d="m9 0 8 3v5c0 5-4 8-8 10-4-2-8-5-8-10V3Z" fill="#fff" />
        <path d="M9 1v16M1 9h16" stroke="#1f1f1f" strokeWidth="1.200" />
        <path d="m13 8 5 10H8Z" fill="#fbb80f" />
        <path d="M13 11v4m0 1v1" stroke="#222" />
      </>
    ),
  },
  {
    label: 'Lautsprecher',
    art: (
      <>
        <path d="M1 6.500h3l4-4v13l-4-4H1Z" fill="none" stroke="#fff" />
        <path d="M10 6.500c1.500 1.500 1.500 3.500 0 5" fill="none" stroke="#fff" />
        <path d="M12.500 4c3 3 3 7 0 10" fill="none" stroke="#aaa" />
        <path d="M15 2c4 4 4 10 0 14" fill="none" stroke="#777" />
      </>
    ),
  },
  {
    label: 'Scanner',
    art: (
      <>
        <path d="m2 3 9 5-1 2Z" fill="#8d8d8d" />
        <path d="m0 11 8-4 7 4-6 5Z" fill="#8f8f8f" />
        <path d="m3 11 5-2 3 2-4 3Z" fill="#e5e5e5" />
        <path d="m12 9 5-2-2 4 2 4-3-1Z" fill="#8d8d8d" />
        <path d="M9 11h3v4H9Z" fill="#2637b4" />
      </>
    ),
  },
  {
    label: 'Audio-Manager',
    art: (
      <>
        <ellipse cx="10" cy="9" rx="4.500" ry="9" transform="rotate(-42 10 9)" fill="#2a2a2a" stroke="#c9c9c9" strokeWidth="1.300" />
        <path d="m1 13 4-4 4 4-5 3Z" fill="#d6d6d6" />
        <circle cx="8.500" cy="10" r="2.200" fill="#f2f2f2" />
      </>
    ),
  },
  {
    label: 'Hinweis',
    art: (
      <>
        <circle cx="11" cy="7" r="6.500" fill="#3e74ea" />
        <path d="m8 12 1 5 4-4Z" fill="#3e74ea" />
        <path d="M11 3v5m0 1.500v1.500" stroke="#fff" strokeWidth="1.800" />
        <path d="M2 10h6v5H2Z" fill="#3b70d8" stroke="#b9c9e5" />
        <path d="M1 16h8v1.500H1Z" fill="#b3b3b3" />
      </>
    ),
  },
  {
    label: 'Netzwerk',
    art: (
      <>
        <path d="M5 3.500h12.500v9H3.500V8M10.500 13v2.500M7 16h7" fill="none" stroke="#fff" strokeWidth="1.200" />
        <path d="M.500 2h4v4l-2 1-2-1ZM2.500 7v6" fill="none" stroke="#fff" />
      </>
    ),
  },
];

const Taskbar: React.FC = () => (
  <footer className="flex h-12 shrink-0 items-stretch bg-[#1f1f1f] text-white">
    <button type="button" aria-label="Start" className="flex w-[58px] items-center justify-center">
      <svg viewBox="0 0 16 16" className="h-4 w-4"><path d="m0 2 6.500-1v6.500H0ZM7.500.900 16 0v7.500H7.500ZM0 8.500h6.500V15L0 14ZM7.500 8.500H16V16l-8.500-1Z" fill="#fff" /></svg>
    </button>
    <label className="flex w-[345px] items-center border border-[#c3c3c3] bg-[#f2f2f2] pr-1 pl-3.5">
      <svg viewBox="0 0 20 20" className="h-5 w-5 shrink-0"><circle cx="13" cy="7" r="6.300" fill="none" stroke="#1b1b1b" strokeWidth="1.400" /><path d="M8.500 11.500.500 19.500" stroke="#1b1b1b" strokeWidth="1.400" /></svg>
      <input type="text" aria-label="Suchen" placeholder="Suchen" className="ml-3.5 min-w-0 flex-1 bg-transparent pt-0.5 text-[17px] text-black outline-none placeholder:text-[#2b2b2b]" />
      <SearchDoodle />
    </label>
    <button type="button" aria-label="Taskansicht" className="mr-1 flex w-[58px] items-center justify-center"><TaskViewIcon className="h-5 w-[22px]" /></button>
    <nav className="flex gap-px">
      {tasks.map(({ label, icon: Icon, size, state }) => (
        <button key={label} type="button" aria-label={label} className={`relative flex w-[58px] items-center justify-center ${state === 'active' ? 'bg-[#4c4c4c]' : ''}`}>
          <Icon className={size} />
          {state && <span className={`absolute bottom-0 h-0.5 bg-[#76b9ed] ${state === 'active' ? 'inset-x-0' : 'inset-x-[5px]'}`}></span>}
        </button>
      ))}
    </nav>
    <div className="ml-auto flex items-center">
      <div className="flex gap-[9px]">
        {trayIcons.map(({ label, art }) => (
          <button key={label} type="button" aria-label={label}>
            <svg viewBox="0 0 18 18" className="h-[18px] w-[18px]">{art}</svg>
          </button>
        ))}
      </div>
      <button type="button" className="ml-[11px] w-[74px] text-center text-[13px] leading-[22px]">
        <time className="block">16:49</time>
        <time className="block">20.09.2023</time>
      </button>
      <button type="button" aria-label="Benachrichtigungen" className="mr-[25px] ml-[21px]">
        <svg viewBox="0 0 18 18" className="h-[18px] w-[18px]"><path d="M.700.700h16.600v13.600H12L9 17.300 6 14.300H.700Z" fill="none" stroke="#fff" strokeWidth="1.200" /></svg>
      </button>
      <button type="button" aria-label="Desktop anzeigen" className="h-full w-1.5 border-l border-[#6b6b6b]"></button>
    </div>
  </footer>
);

const App: React.FC = () => {
  return (
    <div className="flex h-screen flex-col overflow-hidden bg-black font-['Noto_Sans','Open_Sans',sans-serif]">
      <section className="relative flex-1">
        {shortcuts.map((shortcut) => (
          <DesktopShortcut key={shortcut.place} {...shortcut} />
        ))}
        <ExplorerWindow />
      </section>
      <Taskbar />
    </div>
  );
};

export default App;
